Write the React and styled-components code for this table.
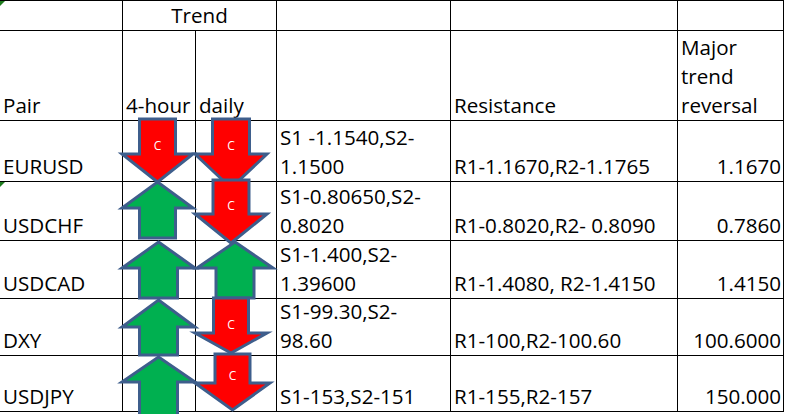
import { Fragment } from "react";
import styled, { createGlobalStyle } from "styled-components";

const GlobalStyle = createGlobalStyle`
  body {
    margin: 0;
    background: #fff;
  }
`;

const Page = styled.div`
  position: relative;
  width: 788px;
  height: 414px;
  overflow: hidden;
  font-family: "Open Sans", "Noto Sans", sans-serif;
  font-size: 20.6px;
  line-height: 29px;
  color: #000;
`;

const Sheet = styled.div`
  display: grid;
  grid-template-columns: 123px 73px 81px 174px 227px 106px;
  grid-template-rows: 30px 90px 61px 59px 58px 57px 56px;
  width: 784px;
  border-top: 1px solid #000;
`;

const justify = { left: "flex-start", center: "center", right: "flex-end" };

const Cell = styled.div`
  position: relative;
  box-sizing: border-box;
  display: flex;
  align-items: flex-end;
  justify-content: ${(p) => justify[p.$align || "left"]};
  grid-column: span ${(p) => p.$span || 1};
  padding: 0 ${(p) => (p.$align === "right" ? 2 : 3)}px;
  border-right: 1px solid #000;
  border-bottom: 1px solid #000;
  white-space: nowrap;

  ${(p) =>
    p.$flag &&
    `
    &::before {
      content: "";
      position: absolute;
      left: 0;
      top: 0;
      border-top: 5px solid #1e7b1e;
      border-right: 5px solid transparent;
    }
  `}
`;

const Lines = styled.div`
  display: flex;
  flex-direction: column;
`;

const ArrowSvg = styled.svg`
  position: absolute;
  left: ${(p) => p.$left - 2}px;
  top: ${(p) => p.$top - 2}px;
  overflow: visible;
`;

const Shape = styled.polygon`
  fill: ${(p) => (p.$dir === "down" ? "#ff0000" : "#00b050")};
  stroke: #3e5e8c;
  stroke-width: 3;
  stroke-linejoin: miter;
`;

const Mark = styled.text`
  fill: #fff;
  font-family: "Open Sans", sans-serif;
  font-size: 12px;
`;

const Arrow = ({ dir, left, top, w, h, shaft, head }) => {
  const a = (w - shaft) / 2;
  const b = a + shaft;
  const hy = h - head;
  const pts =
    dir === "down"
      ? [[a, 0], [b, 0], [b, hy], [w, hy], [w / 2, h], [0, hy], [a, hy]]
      : [[w / 2, 0], [w, head], [b, head], [b, h], [a, h], [a, head], [0, head]];
  return (
    <ArrowSvg $left={left} $top={top} width={w + 4} height={h + 4}>
      <Shape $dir={dir} points={pts.map(([x, y]) => `${x + 2},${y + 2}`).join(" ")} />
      {dir === "down" && (
        <Mark x={w / 2 + 2} y={hy * 0.8 + 2} textAnchor="middle" dominantBaseline="middle">
          C
        </Mark>
      )}
    </ArrowSvg>
  );
};

const rows = [
  { pair: "EURUSD", s: ["S1 -1.1540,S2-", "1.1500"], r: "R1-1.1670,R2-1.1765", m: "1.1670" },
  { pair: "USDCHF", s: ["S1-0.80650,S2-", "0.8020"], r: "R1-0.8020,R2- 0.8090", m: "0.7860", flag: true },
  { pair: "USDCAD", s: ["S1-1.400,S2-", "1.39600"], r: "R1-1.4080, R2-1.4150", m: "1.4150" },
  { pair: "DXY", s: ["S1-99.30,S2-", "98.60"], r: "R1-100,R2-100.60", m: "100.6000" },
  { pair: "USDJPY", s: ["S1-153,S2-151"], r: "R1-155,R2-157", m: "150.000" },
];

// floating shapes over the trend columns
const arrows = [
  { dir: "down", left: 122, top: 119, w: 71, h: 63, shaft: 36, head: 28 },
  { dir: "down", left: 195, top: 119, w: 72, h: 69, shaft: 37, head: 34 },
  { dir: "up", left: 122, top: 182, w: 71, h: 56, shaft: 36, head: 26 },
  { dir: "down", left: 195, top: 180, w: 72, h: 63, shaft: 36, head: 29 },
  { dir: "up", left: 122, top: 242, w: 73, h: 56, shaft: 38, head: 26 },
  { dir: "up", left: 197, top: 242, w: 76, h: 56, shaft: 38, head: 26 },
  { dir: "up", left: 122, top: 300, w: 73, h: 55, shaft: 38, head: 27 },
  { dir: "down", left: 195, top: 298, w: 72, h: 55, shaft: 35, head: 20 },
  { dir: "up", left: 122, top: 357, w: 73, h: 62, shaft: 38, head: 25 },
  { dir: "down", left: 195, top: 354, w: 75, h: 56, shaft: 35, head: 27 },
];

export default function App() {
  return (
    <Page>
      <GlobalStyle />
      <Sheet>
        <Cell $flag />
        <Cell $span={2} $align="center">Trend</Cell>
        <Cell />
        <Cell />
        <Cell />

        <Cell>Pair</Cell>
        <Cell>4-hour</Cell>
        <Cell>daily</Cell>
        <Cell />
        <Cell>Resistance</Cell>
        <Cell>
          <Lines>
            <span>Major</span>
            <span>trend</span>
            <span>reversal</span>
          </Lines>
        </Cell>

        {rows.map((row) => (
          <Fragment key={row.pair}>
            <Cell $flag={row.flag}>{row.pair}</Cell>
            <Cell />
            <Cell />
            <Cell>
              <Lines>
                {row.s.map((line) => (
                  <span key={line}>{line}</span>
                ))}
              </Lines>
            </Cell>
            <Cell>{row.r}</Cell>
            <Cell $align="right">{row.m}</Cell>
          </Fragment>
        ))}
      </Sheet>

      {arrows.map((a, i) => (
        <Arrow key={i} {...a} />
      ))}
    </Page>
  );
}
